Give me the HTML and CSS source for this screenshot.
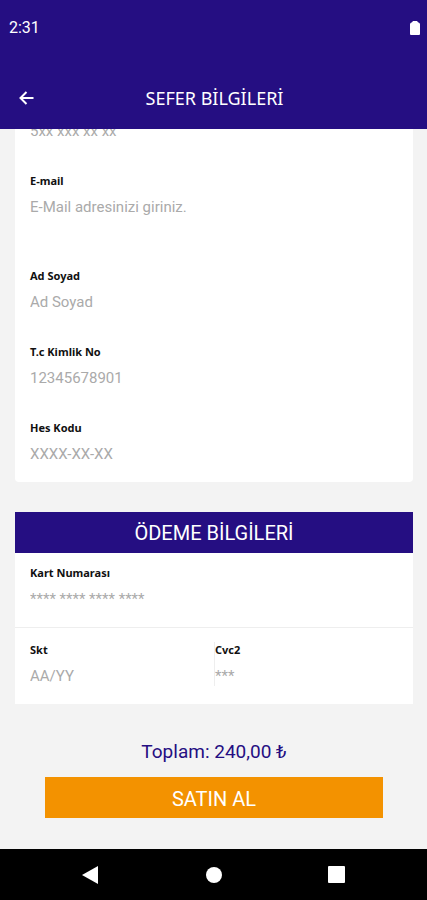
FILE: index.html
```html
<!DOCTYPE html>
<html lang="tr">
<head>
  <meta charset="UTF-8">
  <meta name="viewport" content="width=device-width, initial-scale=1.0">
  <title>Sefer Bilgileri</title>
  <link rel="stylesheet" href="styles.css">
</head>
<body>

<header class="header">
  <div class="status-bar">
    <span>2:31</span>
    <svg class="battery" width="10" height="14" viewBox="0 0 10 14">
      <path d="M3 0h4l1 1.200q2 .3 2 2V13a1 1 0 0 1-1 1H1a1 1 0 0 1-1-1V3.200q0-1.700 2-2z" fill="#fff"/>
    </svg>
  </div>
  <div class="title-bar">
    <button class="back" type="button" aria-label="Geri">
      <svg width="16" height="16" viewBox="0 0 16 16" fill="none" stroke="#fff" stroke-width="2">
        <path d="M15.500 8H2.500M8.500 2L2.500 8L8.500 14"/>
      </svg>
    </button>
    <h1>SEFER BİLGİLERİ</h1>
  </div>
</header>

<main class="content">
  <form id="odeme">
    <!-- Yolcu bilgileri -->
    <section class="card passenger">
      <div class="field">
        <input id="telefon" type="tel" placeholder="5xx xxx xx xx" aria-label="Telefon">
      </div>
      <div class="field email">
        <label for="email">E-mail</label>
        <input id="email" type="email" placeholder="E-Mail adresinizi giriniz.">
      </div>
      <div class="field">
        <label for="ad">Ad Soyad</label>
        <input id="ad" type="text" placeholder="Ad Soyad">
      </div>
      <div class="field">
        <label for="tc">T.c Kimlik No</label>
        <input id="tc" type="text" placeholder="12345678901">
      </div>
      <div class="field">
        <label for="hes">Hes Kodu</label>
        <input id="hes" type="text" placeholder="XXXX-XX-XX">
      </div>
    </section>

    <!-- Kart bilgileri -->
    <section class="card payment">
      <h2>ÖDEME BİLGİLERİ</h2>
      <div class="field number">
        <label for="kart">Kart Numarası</label>
        <input id="kart" type="text" placeholder="**** **** **** ****">
      </div>
      <div class="card-row">
        <div class="field">
          <label for="skt">Skt</label>
          <input id="skt" type="text" placeholder="AA/YY">
        </div>
        <div class="field cvc">
          <label for="cvc">Cvc2</label>
          <input id="cvc" type="text" placeholder="***">
        </div>
      </div>
    </section>

    <p class="total">Toplam: 240,00 ₺</p>
    <button class="buy" type="submit">SATIN AL</button>
  </form>
</main>

<nav class="nav-bar">
  <button type="button" aria-label="Geri">
    <svg width="20" height="20" viewBox="0 0 20 20"><path d="M2 10L18 1v18z" fill="#fff"/></svg>
  </button>
  <button type="button" aria-label="Ana ekran">
    <svg width="20" height="20" viewBox="0 0 20 20"><circle cx="10" cy="10" r="8" fill="#fff"/></svg>
  </button>
  <button type="button" aria-label="Son uygulamalar">
    <svg width="20" height="20" viewBox="0 0 20 20"><rect x="1" y="1" width="17" height="17" rx="1" fill="#fff"/></svg>
  </button>
</nav>

</body>
</html>
```
FILE: styles.css
```css
* {
  box-sizing: border-box;
}
body {
  margin: 0;
  min-height: 100vh;
  display: flex;
  flex-direction: column;
  font-family: Roboto, sans-serif;
  background-color: #f3f3f3;
}
button {
  border: none;
  padding: 0;
  background: none;
  font-family: inherit;
  cursor: pointer;
}
svg {
  display: block;
}

.header {
  background-color: #250e82;
  color: #fff;
}
.status-bar {
  display: flex;
  justify-content: space-between;
  align-items: center;
  height: 55px;
  padding: 0 7px 0 9px;
  font-size: 16px;
}
.title-bar {
  display: grid;
  grid-template-columns: 36px 1fr 34px;
  align-items: center;
  height: 74px;
  padding: 12px 8px 0;
}
.back {
  display: flex;
  justify-content: center;
}
.title-bar h1 {
  margin: 0;
  font-family: "Noto Sans", sans-serif;
  font-size: 18px;
  font-weight: 400;
  text-align: center;
}

.content {
  flex: 1;
  overflow: hidden;
  padding: 0 14px 30px 15px;
}
.card {
  background-color: #fff;
}
.field {
  display: flex;
  flex-direction: column;
  gap: 8px;
}
.field label {
  font-family: "Noto Sans", sans-serif;
  font-size: 11px;
  font-weight: 700;
  line-height: 16px;
  color: #111;
}
.field input {
  width: 100%;
  height: 20px;
  padding: 0;
  border: none;
  outline: none;
  background: none;
  font-family: inherit;
  font-size: 15px;
}
.field input::placeholder {
  color: #aaa;
}

/* liste biraz kaydırılmış, ilk alan başlığın altında kalıyor */
.passenger {
  display: flex;
  flex-direction: column;
  gap: 32px;
  margin-top: -24px;
  padding: 16px 15px 18px;
  border-radius: 4px;
}
.email {
  margin-bottom: 19px;
}

.payment {
  margin-top: 30px;
}
.payment h2 {
  margin: 0;
  padding-top: 1px;
  background-color: #250e82;
  color: #fff;
  font-size: 20px;
  font-weight: 400;
  line-height: 40px;
  text-align: center;
}
.number {
  padding: 12px 15px 18px;
  border-bottom: 1px solid #eee;
}
.card-row {
  display: grid;
  grid-template-columns: 1fr 1fr;
  padding: 14px 15px 18px;
}
.cvc {
  border-left: 1px solid #eee;
}

.total {
  margin: 36px 0 13px;
  color: #250e82;
  font-size: 19px;
  line-height: 24px;
  text-align: center;
}
.buy {
  display: block;
  width: calc(100% - 60px);
  height: 41px;
  margin: 0 auto;
  padding-top: 2px;
  background-color: #f39200;
  color: #fff;
  font-size: 20px;
}

.nav-bar {
  display: flex;
  justify-content: space-between;
  align-items: center;
  height: 51px;
  padding: 0 80px;
  background-color: #000;
}
```
